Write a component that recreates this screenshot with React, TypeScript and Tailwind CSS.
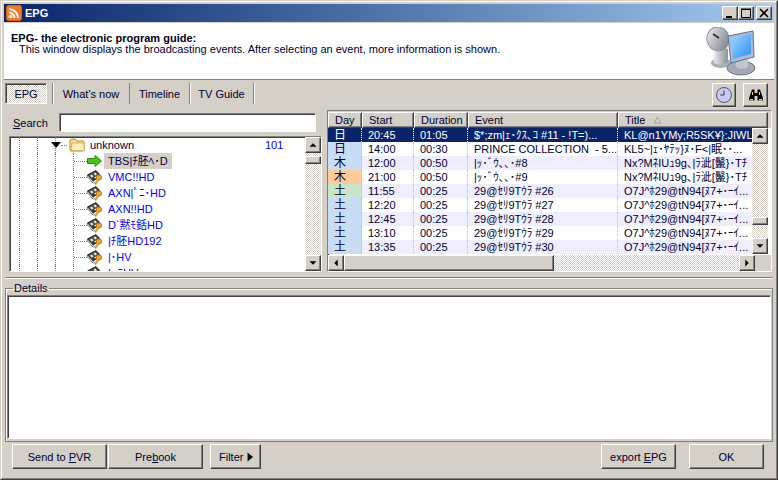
const FONT = "font-['Liberation_Sans','Noto_Sans_CJK_JP',sans-serif]";
const raised = "border border-t-white border-l-white border-r-[#404040] border-b-[#404040] shadow-[inset_-1px_-1px_0_#808080]";
const sunken = "border border-t-[#808080] border-l-[#808080] border-r-white border-b-white shadow-[inset_1px_1px_0_#404040]";
const dither = "bg-[repeating-conic-gradient(#ffffff_0_25%,#d4d0c8_0_50%)] bg-[length:2px_2px]";

function Rss() {
  return (
    <svg width="16" height="16" viewBox="0 0 16 16">
      <rect x="0.5" y="0.5" width="15" height="15" rx="2" fill="#f47a20" stroke="#e06010" />
      <circle cx="4.5" cy="11.5" r="1.8" fill="#fff" />
      <path d="M3 7.5a5.5 5.5 0 0 1 5.5 5.5M3 4a9 9 0 0 1 9 9" stroke="#fff" strokeWidth="2" fill="none" />
    </svg>
  );
}
function Arrow({ d }: { d: "up" | "down" | "left" | "right" }) {
  const p = { up: "M4 10 L8 6 L12 10Z", down: "M4 6 L12 6 L8 10Z", left: "M10 4 L10 12 L6 8Z", right: "M6 4 L6 12 L10 8Z" }[d];
  return <svg width="16" height="16" viewBox="0 0 16 16"><path d={p} fill="#000" /></svg>;
}
function SBtn({ d, h = "h-[16px]" }: { d: "up" | "down" | "left" | "right"; h?: string }) {
  return <div className={`w-[16px] ${h} shrink-0 bg-[#d4d0c8] flex items-center justify-center ${raised}`}><Arrow d={d} /></div>;
}
function Logo() {
  return (
    <svg width="50" height="50" viewBox="0 0 50 50">
      <defs>
        <linearGradient id="dish" x1="0" y1="0" x2="1" y2="1"><stop offset="0" stopColor="#f4f4f4" /><stop offset="1" stopColor="#70757f" /></linearGradient>
        <linearGradient id="stand" x1="0" y1="0" x2="1" y2="0"><stop offset="0" stopColor="#e4e6ea" /><stop offset="1" stopColor="#8c919b" /></linearGradient>
        <linearGradient id="scr" x1="0" y1="0" x2="1" y2="1"><stop offset="0" stopColor="#a0d8ff" /><stop offset="1" stopColor="#2f8ef0" /></linearGradient>
      </defs>
      <ellipse cx="15" cy="36" rx="10" ry="5" fill="#a9adb5" />
      <path d="M9 18 L22 22 L22 35 Q15 40 8 36Z" fill="url(#stand)" />
      <ellipse cx="12" cy="12" rx="11" ry="12" fill="url(#dish)" stroke="#8d929c" transform="rotate(-15 12 12)" />
      <path d="M7 7 L13 11" stroke="#333" strokeWidth="2" />
      <ellipse cx="35" cy="41" rx="14" ry="7" fill="#a4a9b3" stroke="#6f7580" />
      <path d="M29 31 L42 31 L42 40 Q35 44 30 40Z" fill="#c2c6cd" />
      <path d="M22 9 L47 4 L48 30 L25 36Z" fill="#aebbd4" stroke="#5f6f90" />
      <path d="M25 11 L45 7 L45 27 L27 32Z" fill="url(#scr)" />
    </svg>
  );
}
function Clock() {
  return (
    <svg width="18" height="18" viewBox="0 0 18 18">
      <circle cx="9" cy="9" r="7.5" fill="#c7c9f5" stroke="#55557a" />
      <path d="M9 4.5V9H5.5" stroke="#333" fill="none" />
    </svg>
  );
}
function Binoculars() {
  return (
    <svg width="16" height="16" viewBox="0 0 16 16">
      <path d="M4 2.5h2.5V6h3V2.5H12l1 3 2 5.5v2.5H9.5V9h-3v4.5H1V11l2-5.5Z" fill="#000" />
      <rect x="2" y="12" width="3" height="1.5" fill="#f0d040" />
      <rect x="11" y="12" width="3" height="1.5" fill="#f0d040" />
      <rect x="4" y="5" width="1" height="3" fill="#f0d040" />
      <rect x="11" y="5" width="1" height="3" fill="#f0d040" />
    </svg>
  );
}
function Folder() {
  return (
    <svg width="16" height="14" viewBox="0 0 16 14">
      <path d="M1 3 Q1 1 3 1H6L8 3H14Q15 3 15 4.5V12Q15 13 14 13H2Q1 13 1 12Z" fill="#f6dc8c" stroke="#b08a30" />
      <path d="M3 5H15V12.5H2Z" fill="#fdf0b8" stroke="#c9a040" strokeWidth="0.7" />
    </svg>
  );
}
function GreenArrow() {
  return (
    <svg width="15" height="12" viewBox="0 0 15 12">
      <path d="M0.5 3.5H8V0.5L14.5 6L8 11.5V8.5H0.5Z" fill="#44c814" stroke="#2c8a10" />
    </svg>
  );
}
function FilmKey() {
  return (
    <svg width="16" height="15" viewBox="0 0 16 15">
      <path d="M0.5 5 L9 0.5 L14 6 L6 11Z" fill="#444" stroke="#222" />
      <path d="M3 5.5 L5 4.5 L6.5 6.5 L4.5 7.5Z M6.5 3.5 L8.5 2.5 L10 4.5 L8 5.5Z M7 7.5 L9 6.5 L10.5 7 L8.5 8.5Z" fill="#eee" />
      <path d="M0.5 5 L6 11 L6 13 L0.5 7Z" fill="#e8e8e8" stroke="#333" strokeWidth="0.6" />
      <circle cx="12" cy="7.5" r="2.6" fill="#f4a820" stroke="#c07810" />
      <path d="M10.5 9.5 L7 13.5 L9 14.5 L11.5 10.5" fill="#f4a820" stroke="#c07810" strokeWidth="0.6" />
    </svg>
  );
}

function Guides({ n }: { n: number }) {
  return (
    <>
      {Array.from({ length: n }).map((_, i) => (
        <div key={i} className="w-[18px] h-full shrink-0 border-l border-dotted border-[#808080]" />
      ))}
    </>
  );
}

const channels: string[] = [
  "VMC!!HD",
  "AXN|ﾟﾆ･HD",
  "AXN!!HD",
  "D`黙ﾓ銛HD",
  "|ﾁ胚HD192",
  "|･HV",
  "|●ﾆHV",
];

function Tree() {
  return (
    <div className={`w-[313px] h-[137px] bg-white flex overflow-hidden ${sunken}`}>
      <div className="flex-1 min-w-0 pl-[9px] overflow-hidden">
        <div className="flex items-center h-[16px]">
          <Guides n={2} />
          <div className="w-0 h-full shrink-0 border-l border-dotted border-[#808080]" />
          <svg width="10" height="6" viewBox="0 0 10 6" className="-ml-[5px] shrink-0"><path d="M0 0H10L5 6Z" fill="#000" /></svg>
          <div className="w-[6px] border-t border-dotted border-[#808080] shrink-0" />
          <div className="ml-[2px] shrink-0"><Folder /></div>
          <span className="ml-[5px] w-[175px] shrink-0 text-[#000040]">unknown</span>
          <span className="text-[#0000ff]">101</span>
        </div>
        <div className="flex items-center h-[16px]">
          <Guides n={3} />
          <div className="w-[18px] h-full shrink-0 border-l border-dotted border-[#808080] flex items-center">
            <div className="w-[13px] border-t border-dotted border-[#808080]" />
          </div>
          <div className="-ml-[4px] shrink-0"><GreenArrow /></div>
          <span className="ml-[2px] px-[4px] h-full bg-[#d4d0c8] text-[#000040] flex items-center">TBS|ﾁ胚ﾍ･D</span>
        </div>
        {channels.map((c) => (
          <div key={c} className="flex items-center h-[16px]">
            <Guides n={3} />
            <div className="w-[18px] h-full shrink-0 border-l border-dotted border-[#808080] flex items-center">
              <div className="w-[13px] border-t border-dotted border-[#808080]" />
            </div>
            <div className="-ml-[4px] shrink-0"><FilmKey /></div>
            <span className="ml-[5px] text-[#0000ff] whitespace-nowrap">{c}</span>
          </div>
        ))}
      </div>
      <div className="w-[16px] shrink-0 flex flex-col">
        <SBtn d="up" />
        <div className={`flex-1 ${dither} pt-[3px]`}>
          <div className={`h-[8px] bg-[#d4d0c8] ${raised}`} />
        </div>
        <SBtn d="down" />
      </div>
    </div>
  );
}

const cols = ["w-[34px]", "w-[52px]", "w-[54px]", "w-[150px]", "w-[150px]"];
const heads = ["Day", "Start", "Duration", "Event", "Title"];
type Row = { day: string; dayBg: string; start: string; dur: string; ev: string; title: string; alt: boolean; sel?: boolean };
const rows: Row[] = [
  { day: "日", dayBg: "bg-[#0a246a]", start: "20:45", dur: "01:05", ev: "$*;zm|ｪ･ｸｽ､ｺ #11 - !T=)...", title: "KL@n1YMy;R5SK¥}:JIWLZ", alt: false, sel: true },
  { day: "日", dayBg: "bg-[#c8dcf4]", start: "14:00", dur: "00:30", ev: "PRINCE COLLECTION  - 5...", title: "KL5~|ｪ･ﾔﾃｯ}ﾇ･F<|眠･･...", alt: false },
  { day: "木", dayBg: "bg-[#c8dcf4]", start: "12:00", dur: "00:50", ev: "|ｯ･ﾞｳ､､･#8", title: "Nx?MﾈIUｭ9g､|ﾗ泚[鬣}･Tﾁ", alt: true },
  { day: "木", dayBg: "bg-[#ffcc99]", start: "21:00", dur: "00:50", ev: "|ｯ･ﾞｳ､､･#9", title: "Nx?MﾈIUｭ9g､|ﾗ泚[鬣}･Tﾁ", alt: false },
  { day: "土", dayBg: "bg-[#c8e6c8]", start: "11:55", dur: "00:25", ev: "29@ｾﾘ9Tｳﾗ #26", title: "O7J^ﾎ29@tN94[ﾇ7+･ｰｲ...", alt: true },
  { day: "土", dayBg: "bg-[#c8dcf4]", start: "12:20", dur: "00:25", ev: "29@ｾﾘ9Tｳﾗ #27", title: "O7J^ﾎ29@tN94[ﾇ7+･ｰｲ...", alt: false },
  { day: "土", dayBg: "bg-[#c8dcf4]", start: "12:45", dur: "00:25", ev: "29@ｾﾘ9Tｳﾗ #28", title: "O7J^ﾎ29@tN94[ﾇ7+･ｰｲ...", alt: true },
  { day: "土", dayBg: "bg-[#c8dcf4]", start: "13:10", dur: "00:25", ev: "29@ｾﾘ9Tｳﾗ #29", title: "O7J^ﾎ29@tN94[ﾇ7+･ｰｲ...", alt: false },
  { day: "土", dayBg: "bg-[#c8dcf4]", start: "13:35", dur: "00:25", ev: "29@ｾﾘ9Tｳﾗ #30", title: "O7J^ﾎ29@tN94[ﾇ7+･ｰｲ...", alt: true },
];

function Table() {
  return (
    <div className={`w-[445px] h-[162px] flex flex-col overflow-hidden bg-white ${sunken}`}>
      <div className="flex h-[17px] shrink-0 pt-[1px] bg-[#d4d0c8]">
        {heads.map((h, i) => (
          <div key={h} className={`${cols[i]} shrink-0 h-[16px] pl-[6px] flex items-center gap-[8px] bg-[#d4d0c8] text-[#000030] ${raised}`}>
            {h}
            {h === "Title" && <svg width="9" height="8" viewBox="0 0 9 8"><path d="M4.5 1 L8 7H1Z" fill="none" stroke="#a0a0a0" /></svg>}
          </div>
        ))}
        <div className="flex-1 bg-[#d4d0c8]" />
      </div>
      <div className="flex flex-1 min-h-0">
        <div className="w-[424px] shrink-0 overflow-hidden">
          {rows.map((r, idx) => (
            <div key={idx} className={`flex h-[14px] leading-[14px] ${r.sel ? "bg-[#0a246a] text-white" : r.alt ? "bg-[#eeeeff] text-[#000030]" : "bg-white text-[#000030]"}`}>
              {[r.day, r.start, r.dur, r.ev, r.title].map((t, i) => (
                <div key={i} className={`${cols[i]} shrink-0 h-full whitespace-pre overflow-hidden border-r border-dotted ${r.sel ? "border-white" : "border-[#c0c0c0]"} ${i === 0 ? `${r.dayBg} pl-[6px] text-[12px]` : "pl-[6px]"}`}>{t}</div>
              ))}
            </div>
          ))}
        </div>
        <div className="w-[16px] shrink-0 flex flex-col h-[126px]">
          <SBtn d="up" />
          <div className={`flex-1 ${dither} pt-[73px]`}>
            <div className={`h-[8px] bg-[#d4d0c8] ${raised}`} />
          </div>
          <SBtn d="down" />
        </div>
      </div>
      <div className="h-[16px] shrink-0 flex">
        <SBtn d="left" />
        <div className={`w-[210px] h-full bg-[#d4d0c8] ${raised}`} />
        <div className={`flex-1 ${dither}`} />
        <SBtn d="right" />
        <div className="w-[16px] shrink-0 bg-[#d4d0c8]" />
      </div>
    </div>
  );
}

function Btn({ w, children, m }: { w: string; children: React.ReactNode; m?: string }) {
  return <div className={`${w} ${m ?? ""} h-[25px] flex items-center justify-center bg-[#d4d0c8] text-[#000030] ${raised}`}><span className="whitespace-pre">{children}</span></div>;
}

export default function App() {
  return (
    <div className={`w-[778px] h-[480px] overflow-hidden bg-[#d4d0c8] text-[11px] leading-[14px] text-black border border-t-[#d4d0c8] border-l-[#d4d0c8] border-r-[#404040] border-b-[#404040] ${FONT}`}>
      <div className="w-full h-full border border-t-white border-l-white border-r-[#808080] border-b-[#808080] p-[2px] flex flex-col">
        <div className="h-[18px] shrink-0 flex items-center bg-gradient-to-r from-[#0a246a] to-[#a6caf0] px-[2px]">
          <Rss />
          <span className="ml-[3px] font-bold text-white">EPG</span>
          <div className="ml-auto flex">
            {[
              <path key="a" d="M2 9h6v2H2z" fill="#000" />,
              <path key="b" d="M1.5 2.5h9v8h-9zM1 2h10" stroke="#000" fill="none" />,
              <path key="c" d="M2 2l8 8M10 2l-8 8" stroke="#000" strokeWidth="1.6" fill="none" />,
            ].map((p, i) => (
              <div key={i} className={`w-[16px] h-[14px] bg-[#d4d0c8] flex items-center justify-center ${i === 2 ? "ml-[2px]" : ""} ${raised}`}>
                <svg width="12" height="12" viewBox="0 0 12 12">{p}</svg>
              </div>
            ))}
          </div>
        </div>
        <div className="mt-[1px] h-[57px] shrink-0 bg-white border-b border-[#808080] flex justify-between pl-[7px] pr-[18px] pt-[8px]">
          <div>
            <div className="font-bold text-[#000020]">EPG- the electronic program guide:</div>
            <div className="-mt-[3px] pl-[8px] text-[#000030]">This window displays the broadcasting events. After selecting an event, more information is shown.</div>
          </div>
          <div className="-mt-[4px]"><Logo /></div>
        </div>
        <div className="flex-1 min-h-0 flex flex-col px-[1px]">
          <div className="h-[30px] shrink-0 flex items-start pt-[3px]">
            <div className={`w-[42px] h-[21px] flex items-center justify-center text-[#000030] ${dither} ${sunken}`}>EPG</div>
            {["What's now", "Timeline", "TV Guide"].map((t, i) => (
              <div key={t} className={`h-[21px] flex items-center justify-center text-[#000030] border-r border-[#808080] shadow-[1px_0_0_#ffffff] ${["w-[78px]", "w-[60px]", "w-[64px]"][i]} ${i === 0 ? "ml-[5px] border-l shadow-[inset_1px_0_0_#ffffff]" : ""}`}>{t}</div>
            ))}
            <div className="ml-auto flex gap-[7px] pr-[5px]">
              <div className={`w-[24px] h-[24px] flex items-center justify-center bg-[#d4d0c8] ${raised}`}><Clock /></div>
              <div className={`w-[25px] h-[24px] flex items-center justify-center bg-[#d4d0c8] ${raised}`}><Binoculars /></div>
            </div>
          </div>
          <div className="flex h-[162px] shrink-0">
            <div className="w-[318px] shrink-0 pl-[4px] flex flex-col">
              <div className="h-[26px] shrink-0 flex items-start pt-[3px]">
                <span className="w-[50px] pl-[4px] pt-[3px] text-[#000030]"><u>S</u>earch</span>
                <div className={`w-[257px] h-[19px] bg-white ${sunken}`} />
              </div>
              <Tree />
            </div>
            <div className="ml-[4px]"><Table /></div>
          </div>
          <div className="h-[6px] shrink-0 border-b border-[#808080] shadow-[0_1px_0_#ffffff]" />
          <fieldset className="mt-[4px] h-[160px] shrink-0 border border-[#808080] shadow-[inset_1px_1px_0_#ffffff] px-[1px] pb-[2px] min-w-0 flex flex-col">
            <legend className="ml-[6px] px-[1px] leading-[12px] text-[#000030]">Details</legend>
            <div className={`h-[144px] mt-[1px] bg-white ${sunken}`} />
          </fieldset>
          <div className="flex-1 flex items-start pt-[2px] pl-[7px] pr-[9px]">
            <Btn w="w-[95px]">Send to <u>P</u>VR</Btn>
            <Btn w="w-[95px]" m="ml-[1px]">Pre<u>b</u>ook</Btn>
            <div className={`w-[51px] ml-[7px] h-[25px] flex items-center justify-between pl-[8px] pr-[2px] bg-[#d4d0c8] text-[#000030] ${raised}`}>
              Filter
              <svg width="16" height="16" viewBox="0 0 16 16"><path d="M5 3 L5 13 L11 8Z" fill="#000" /></svg>
            </div>
            <div className="flex-1" />
            <Btn w="w-[75px]">export <u>E</u>PG</Btn>
            <Btn w="w-[75px]" m="ml-[13px]">OK</Btn>
          </div>
        </div>
      </div>
    </div>
  );
}
